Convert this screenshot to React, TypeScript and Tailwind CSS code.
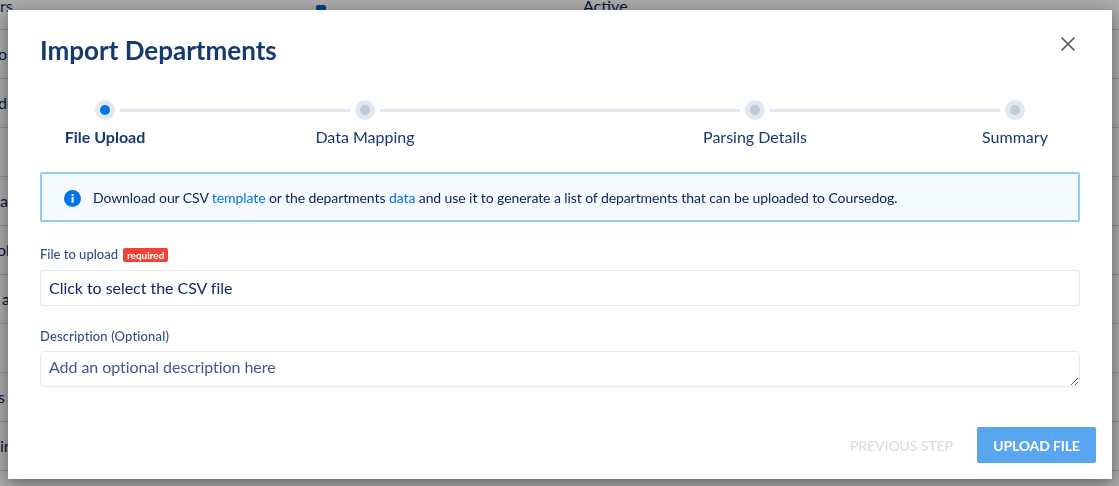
import React from "react";

const rows = [
  { t: "ou", c: "-ml-[2px]" },
  { t: "du", c: "-ml-[2px]" },
  { t: "", c: "" },
  { t: "a", c: "ml-0" },
  { t: "ol", c: "-ml-[3px]" },
  { t: "a", c: "ml-[2px]" },
  { t: "", c: "" },
  { t: "s a", c: "-ml-[2px]" },
  { t: "ir", c: "ml-0" },
];

function Dot({ active = false }: { active?: boolean }) {
  return (
    <div className="flex h-5 w-5 shrink-0 items-center justify-center rounded-full bg-[#e2e8f0]">
      <div className={`h-[10px] w-[10px] rounded-full ${active ? "bg-[#0073e6]" : "bg-[#bfcad9]"}`} />
    </div>
  );
}

function Line({ className }: { className: string }) {
  return <div className={`mx-[5px] h-[3px] shrink-0 bg-[#e2e8f0] ${className}`} />;
}

export default function App() {
  return (
    <div className="relative h-[486px] w-[1119px] overflow-hidden bg-white font-['Lato','Liberation_Sans',sans-serif] text-[#0b1f5c]">
      <div className="relative flex h-[30px] items-end border-b border-[#d5d5d5]">
        <span className="absolute left-0 top-[-6px] text-[16px]">rs</span>
        <span className="absolute left-[316px] top-[5px] h-[6px] w-[10px] rounded-t-[2px] bg-[#0060df]" />
        <span className="absolute left-[583px] top-[-6px] text-[16px]">Active</span>
      </div>
      {rows.map((r, i) => (
        <div key={i} className="flex h-[49px] items-center border-b border-[#d5d5d5] text-[16px] whitespace-nowrap">
          <span className={r.c}>{r.t}</span>
        </div>
      ))}

      <div className="fixed inset-0 bg-black/33">
        <div className="ml-[8px] mt-[10px] flex h-[469px] w-[1104px] flex-col bg-white px-[32px] shadow-[0_4px_16px_rgba(0,0,0,0.45)]">
          <div className="flex items-start justify-between pt-[23px]">
            <h1 className="text-[26px] leading-[34px] font-bold text-[#163a70]">Import Departments</h1>
            <button className="mr-[4px] mt-[3px] text-[#555555]">
              <svg width="16" height="16" viewBox="0 0 16 16" fill="none" stroke="currentColor" strokeWidth="1.6" className="block">
                <path d="M1.5 1.5 L14.5 14.5 M14.5 1.5 L1.5 14.5" />
              </svg>
            </button>
          </div>

          <div className="mt-[33px] flex items-center pl-[55px]">
            <Dot active />
            <Line className="w-[230px]" />
            <Dot />
            <Line className="w-[360px]" />
            <Dot />
            <Line className="w-[230px]" />
            <Dot />
          </div>
          <div className="mt-[7px] flex justify-between text-[16px] leading-[20px] text-[#163a70]">
            <div className="w-[130px] text-center font-bold">File Upload</div>
            <div className="w-[130px] text-center">Data Mapping</div>
            <div className="ml-[130px] w-[130px] text-center">Parsing Details</div>
            <div className="w-[130px] text-center">Summary</div>
          </div>

          <div className="mt-[25px] flex h-[50px] w-[1040px] items-center rounded-[2px] border-2 border-[#90caf9] bg-[#f5faff] pl-[22px] text-[14px] tracking-[-0.085px]">
            <svg width="17" height="17" viewBox="0 0 18 18" className="mr-[12px] mt-[3px] shrink-0">
              <circle cx="9" cy="9" r="9" fill="#0073e6" />
              <rect x="8" y="7.5" width="2.2" height="6" fill="#fff" />
              <rect x="8" y="4.4" width="2.2" height="2" fill="#fff" />
            </svg>
            <span>
              Download our CSV <span className="text-[#0073e6]">template</span> or the departments{" "}
              <span className="text-[#0073e6]">data</span> and use it to generate a list of departments that can be uploaded to Coursedog.
            </span>
          </div>

          <div className="mt-[25px] flex h-[16px] items-center gap-[5px] text-[13px] font-medium text-[#33507f]">
            <span>File to upload</span>
            <span className="flex h-[14px] items-center rounded-[2px] bg-[#f44336] px-[4px] text-[10px] font-bold text-white">required</span>
          </div>
          <div className="mt-[7px] flex h-[36px] w-[1040px] items-center rounded-[4px] border border-[#e2e8f0] pl-[8px] text-[16px] tracking-[-0.04px] text-[#0f2a66]">
            Click to select the CSV file
          </div>

          <div className="mt-[22px] h-[16px] text-[13px] leading-[16px] tracking-[0.14px] font-medium text-[#33507f]">Description (Optional)</div>
          <textarea
            readOnly
            placeholder="Add an optional description here"
            className="mt-[7px] h-[36px] w-[1040px] resize-y rounded-[4px] border border-[#e2e8f0] px-[8px] py-[5px] text-[16px] leading-[20px] tracking-[-0.06px] outline-none placeholder:text-[#3c5a8a]"
          />

          <div className="mt-[40px] -mr-[16px] flex items-center justify-end gap-[24px]">
            <span className="text-[14px] font-medium tracking-[-0.08px] text-[#dcdcdc] uppercase">Previous step</span>
            <button className="flex h-[36px] w-[119px] items-center justify-center rounded-[2px] bg-[#58a5f0] text-[14px] font-bold tracking-[-0.15px] text-white uppercase">
              Upload file
            </button>
          </div>
        </div>
      </div>
    </div>
  );
}
